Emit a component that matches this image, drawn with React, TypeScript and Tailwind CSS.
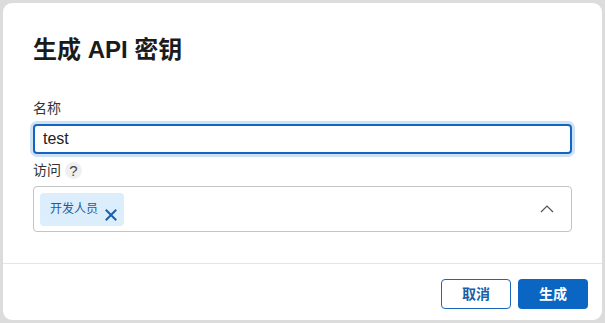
import React from 'react'

const font = "font-['Liberation_Sans','Noto_Sans_CJK_SC',sans-serif]"

function XIcon() {
  return (
    <svg width="12" height="12" viewBox="0 0 12 12" className="mt-[7px]">
      <path d="M1.5 1.5 L10.5 10.5 M10.5 1.5 L1.5 10.5" stroke="#1a5fa8" strokeWidth="2" strokeLinecap="square" fill="none" />
    </svg>
  )
}

function ChevronUp() {
  return (
    <svg width="14" height="8" viewBox="0 0 14 8">
      <path d="M1 7 L7 1 L13 7" stroke="#555" strokeWidth="1.2" fill="none" />
    </svg>
  )
}

export default function App() {
  return (
    <div className={`h-[323px] w-[605px] bg-[#dcdcdc] p-[3px] ${font}`}>
      <div className="flex h-[317px] w-[599px] flex-col rounded-[9px] bg-white">
        <div className="flex h-[260px] flex-col px-[30px] pt-[33px]">
          <h1 className="h-7 text-[24px] leading-7 font-bold text-[#1b1b1b]">生成 API 密钥</h1>

          <label className="mt-[34px] h-5 text-[14px] leading-5 text-[#333]">名称</label>
          <div className="mt-[6px] flex h-[30px] items-center rounded-[4px] border-2 border-[#1565c0] px-[8px] ring-[3px] ring-[#cfe2f5]">
            <span className="text-[16px] text-[#222]">test</span>
          </div>

          <div className="mt-[6px] flex h-5 items-center gap-[4px]">
            <span className="text-[14px] leading-5 text-[#333]">访问</span>
            <span className="flex h-[17px] w-[17px] items-center justify-center rounded-full bg-[#efefef] text-[15px] leading-none text-[#444]">?</span>
          </div>

          <div className="mt-[6px] flex h-[46px] items-center justify-between rounded-[4px] border border-[#c4c4c4] pr-[17px] pl-[6px]">
            <div className="flex h-[33px] w-[84px] items-start gap-[7px] rounded-[4px] bg-[#dcedfb] pt-[9px] pl-[10px]">
              <span className="text-[12px] leading-[14px] text-[#1d5b9c]">开发人员</span>
              <XIcon />
            </div>
            <ChevronUp />
          </div>
        </div>

        <div className="flex flex-1 items-start justify-end gap-[7px] border-t border-[#e6e6e6] pt-[15px] pr-[14px]">
          <button className="h-[30px] w-[70px] rounded-[4px] border border-[#1a66b8] bg-white text-[14px] font-semibold text-[#1a5fa8]">
            取消
          </button>
          <button className="h-[30px] w-[70px] rounded-[4px] bg-[#0a66c2] text-[14px] font-semibold text-white">
            生成
          </button>
        </div>
      </div>
    </div>
  )
}
